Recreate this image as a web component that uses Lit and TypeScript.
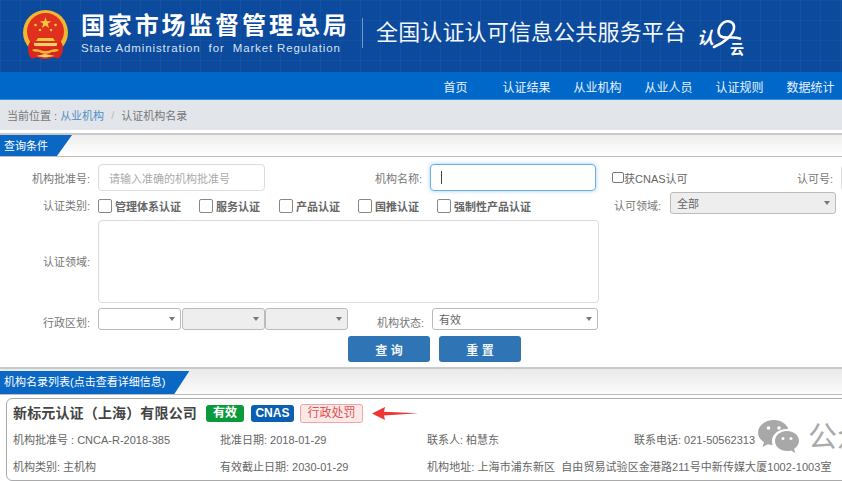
import { LitElement, html, css } from "lit";
import { customElement } from "lit/decorators.js";

const NAV = ["首页", "认证结果", "从业机构", "从业人员", "认证规则", "数据统计"];
const CHECKS = ["管理体系认证", "服务认证", "产品认证", "国推认证", "强制性产品认证"];

@customElement("app-root")
export class AppRoot extends LitElement {
  private _emblem() {
    return html`
      <svg class="emblem" viewBox="0 0 47 50" width="47" height="50">
        <circle cx="23.5" cy="22.5" r="22.5" fill="#f2b632"></circle>
        <circle cx="23.5" cy="21.5" r="18.5" fill="#e0301e"></circle>
        <path d="M23.5 7l1.4 4.2h4.4l-3.6 2.6 1.4 4.2-3.6-2.6-3.6 2.6 1.4-4.2-3.6-2.6h4.4z" fill="#f7c93e"></path>
        <g fill="#f7c93e">
          <circle cx="13.5" cy="15" r="1.3"></circle>
          <circle cx="33.5" cy="15" r="1.3"></circle>
          <circle cx="18" cy="20" r="1.3"></circle>
          <circle cx="29" cy="20" r="1.3"></circle>
        </g>
        <path d="M16 28h15l2 3H14z" fill="#f7c93e"></path>
        <path d="M12 33h23v3H12z" fill="#f4cf6a"></path>
        <path d="M6 38c0-3 1-5 3-7 1 3 3 5 6 6h17c3-1 5-3 6-6 2 2 3 4 3 7 0 5-2 8-4 10-2 1-4 0-6-1-3 2-6 2-8 2s-5 0-8-2c-2 1-4 2-6 1-2-2-3-5-3-10z" fill="#d8261c"></path>
        <path d="M10 40c4-3 8 1 13.500 1s9.500-4 13.500-1c-3 3-7 1-9 3-2 1-7 1-9 0-2-2-6 0-9-3z" fill="#f2b632"></path>
        <path d="M14 46l9-2 10 2-10 1.500z" fill="#f7d36a"></path>
      </svg>
    `;
  }

  private _logo() {
    return html`
      <div class="logo">
        <svg viewBox="0 0 50 36" width="50" height="36">
          <path d="M18 28C28 24 39 15 38 7 37 2 31 1 27 4 22 8 21 15 25 17.500 30 20 37 17 44 19.500" fill="none" stroke="#fff" stroke-width="2.600" stroke-linecap="round"></path>
        </svg>
        <span class="logo-ren">认</span>
        <span class="logo-yun">云</span>
      </div>
    `;
  }

  private _select(text = "", off = false, cls = "") {
    return html`<div class="select ${off ? "off" : ""} ${cls}"><span>${text}</span><i></i></div>`;
  }

  private _sectionBar(title: string, cls: string) {
    return html`
      <div class="bar ${cls}">
        <div class="tab">${title}</div>
      </div>
    `;
  }

  render() {
    return html`
      <header class="top">
        ${this._emblem()}
        <div class="brand">
          <div class="cn">国家市场监督管理总局</div>
          <div class="en">State Administration&nbsp; for&nbsp; Market Regulation</div>
        </div>
        <div class="sep"></div>
        <div class="platform">全国认证认可信息公共服务平台</div>
        ${this._logo()}
      </header>
      <nav class="nav">${NAV.map((n) => html`<a>${n}</a>`)}</nav>
      <div class="crumb">
        <span>当前位置 :</span><a>从业机构</a><em>/</em><span>认证机构名录</span>
      </div>

      ${this._sectionBar("查询条件", "first")}
      <section class="form">
        <div class="row r1">
          <label class="lab">机构批准号:</label>
          <div class="input ph">请输入准确的机构批准号</div>
          <label class="lab name">机构名称:</label>
          <div class="input focus"><b class="caret"></b></div>
          <div class="cnas"><i class="mini"></i>获CNAS认可</div>
          <label class="lab permit">认可号:</label>
          <div class="input stub"></div>
        </div>
        <div class="row r2">
          <label class="lab">认证类别:</label>
          <div class="checks">
            ${CHECKS.map((c) => html`<div class="check"><i></i><span>${c}</span></div>`)}
          </div>
          <label class="lab field">认可领域:</label>
          ${this._select("全部", true, "wide")}
        </div>
        <div class="row r3">
          <label class="lab">认证领域:</label>
          <div class="area"></div>
        </div>
        <div class="row r4">
          <label class="lab">行政区划:</label>
          <div class="regions">
            ${this._select()}${this._select("", true)}${this._select("", true)}
          </div>
          <label class="lab state">机构状态:</label>
          ${this._select("有效", false, "wide")}
        </div>
        <div class="row btns">
          <button>查 询</button>
          <button>重 置</button>
        </div>
      </section>

      ${this._sectionBar("机构名录列表(点击查看详细信息)", "second")}
      <article class="card">
        <div class="head">
          <h2>新标元认证（上海）有限公司</h2>
          <span class="tag green">有效</span>
          <span class="tag blue">CNAS</span>
          <span class="tag pink">行政处罚</span>
          <svg class="arrow" viewBox="0 0 46 13" width="46" height="13">
            <path d="M0 6.500L13 0l-1 4.800L46 6.200 12 8.400l1 4.600z" fill="#ee3535"></path>
          </svg>
        </div>
        <div class="info">
          <span>机构批准号 : CNCA-R-2018-385</span>
          <span>批准日期: 2018-01-29</span>
          <span>联系人: 柏慧东</span>
          <span>联系电话: 021-50562313</span>
          <span>机构类别: 主机构</span>
          <span>有效截止日期: 2030-01-29</span>
          <span class="addr">机构地址: 上海市浦东新区&nbsp; 自由贸易试验区金港路211号中新传媒大厦1002-1003室</span>
        </div>
      </article>

      <div class="mark">
        <svg viewBox="0 0 41 34" width="41" height="34">
          <path d="M16 0C7 0 0 5.500 0 12.500c0 4 2.300 7.400 6 9.700L4.500 27l5.300-2.800c1.600.4 3.200.6 4.900.7-.5-1.300-.7-2.500-.7-3.800 0-6.800 6.500-12 14.500-12 .6 0 1.200 0 1.800.1C28.800 4 23 0 16 0z" fill="#a8a8a8"></path>
          <path d="M29 11c-6.600 0-12 4.300-12 10s5.400 10 12 10c1.400 0 2.700-.2 4-.6l4.300 2.600-1.200-4.200c3-1.900 4.900-4.700 4.900-7.800 0-5.700-5.400-10-12-10z" fill="#a8a8a8"></path>
          <g fill="#fff">
            <circle cx="10.500" cy="8" r="1.800"></circle>
            <circle cx="21" cy="8" r="1.800"></circle>
            <circle cx="25" cy="18.500" r="1.500"></circle>
            <circle cx="33" cy="18.500" r="1.500"></circle>
          </g>
        </svg>
        <span>公众号</span>
      </div>
    `;
  }

  static styles = css`
    :host {
      display: block;
      position: relative;
      width: 842px;
      height: 481px;
      overflow: hidden;
      background: #fff;
      font-family: "Liberation Sans", "Noto Sans CJK SC", sans-serif;
      font-size: 11px;
      color: #666;
    }

    .top {
      display: flex;
      align-items: flex-start;
      height: 72px;
      padding: 10px 0 0 22px;
      box-sizing: border-box;
      background-color: #0b4a9d;
      background-image:
        linear-gradient(rgba(255, 255, 255, 0.035) 1px, transparent 1px),
        linear-gradient(90deg, rgba(255, 255, 255, 0.035) 1px, transparent 1px);
      background-size: 20px 20px;
    }

    .emblem {
      flex: none;
    }

    .brand {
      margin-left: 12px;
      width: 281px;
      color: #fff;
    }

    .cn {
      margin-top: 2px;
      font-size: 24px;
      line-height: 28px;
      font-weight: 700;
      letter-spacing: 2.85px;
      white-space: nowrap;
    }

    .en {
      margin-top: 1px;
      font-size: 11.500px;
      line-height: 14px;
      letter-spacing: 0.86px;
      color: #d5e2f3;
      white-space: nowrap;
    }

    .sep {
      flex: none;
      width: 1px;
      height: 30px;
      margin-top: 8px;
      background: #6f9bd0;
    }

    .platform {
      flex: none;
      margin: 9px 0 0 13px;
      font-size: 22px;
      line-height: 28px;
      letter-spacing: 0.15px;
      color: #f2f7fd;
      white-space: nowrap;
    }

    .logo {
      position: relative;
      flex: none;
      width: 50px;
      height: 36px;
      margin: 9px 0 0 10px;
      color: #fff;
    }

    .logo svg {
      position: absolute;
      left: 0;
      top: 0;
    }

    .logo-ren {
      position: absolute;
      left: 1px;
      top: 10px;
      font-size: 17px;
      line-height: 20px;
      font-weight: 700;
      font-style: italic;
    }

    .logo-yun {
      position: absolute;
      left: 34px;
      top: 22px;
      font-size: 14px;
      line-height: 16px;
      font-weight: 700;
    }

    .nav {
      display: flex;
      height: 28px;
      padding-left: 420px;
      box-sizing: border-box;
      background: #0068c9;
      border-bottom: 1px solid #3d8fdc;
    }

    .nav a {
      flex: none;
      width: 71px;
      text-align: center;
      font-size: 12px;
      line-height: 32px;
      color: #e8f2fc;
    }

    .crumb {
      display: flex;
      align-items: center;
      height: 30px;
      padding-left: 7px;
      box-sizing: border-box;
      background: #e2e5ea;
      color: #777;
    }

    .crumb a {
      margin-left: 3px;
      color: #4f8fc7;
    }

    .crumb em {
      margin: 0 7px 0 7px;
      font-style: normal;
      color: #bbb;
    }

    .bar {
      height: 24px;
      box-sizing: border-box;
      border-top: 2px solid #c9c9c9;
      border-bottom: 1px solid #bdbdbd;
      background: linear-gradient(#eeeeee, #ffffff);
    }

    .bar.first {
      margin-top: 3px;
    }

    .bar.second {
      height: 28px;
      margin-top: 5px;
      padding-top: 2px;
      background: linear-gradient(#e9e9e9, #fbfbfb);
    }

    .tab {
      display: inline-block;
      height: 100%;
      padding: 0 24px 0 4px;
      box-sizing: border-box;
      background: #0a68c4;
      clip-path: polygon(0 0, 100% 0, calc(100% - 15px) 100%, 0 100%);
      color: #fff;
      font-size: 11px;
      line-height: 22px;
      white-space: nowrap;
    }

    .form {
      display: flex;
      flex-direction: column;
      width: 860px;
      padding-top: 7px;
    }

    .row {
      display: flex;
      align-items: center;
    }

    .lab {
      flex: none;
      width: 90px;
      margin-right: 8px;
      text-align: right;
      white-space: nowrap;
      color: #777;
    }

    .input {
      flex: none;
      display: flex;
      align-items: center;
      width: 167px;
      height: 27px;
      padding-left: 10px;
      box-sizing: border-box;
      border: 1px solid #dcdcdc;
      border-radius: 4px;
    }

    .ph {
      color: #aaa;
    }

    .focus {
      width: 166px;
      border-color: #66afe9;
      box-shadow: 0 0 4px rgba(102, 175, 233, 0.6);
    }

    .caret {
      width: 1px;
      height: 13px;
      background: #444;
    }

    .lab.name {
      width: 157px;
      margin-right: 8px;
    }

    .cnas {
      flex: none;
      display: flex;
      align-items: center;
      width: 132px;
      margin-left: 16px;
      color: #666;
      white-space: nowrap;
    }

    .mini {
      width: 10px;
      height: 9px;
      border: 1px solid #777;
      border-radius: 2px;
    }

    .lab.permit {
      width: 89px;
      margin-right: 8px;
    }

    .stub {
      width: 20px;
    }

    .r2 {
      align-items: flex-start;
      height: 22px;
      margin-top: 1px;
    }

    .r2 .lab {
      margin-top: 5px;
    }

    .checks {
      flex: none;
      display: grid;
      grid-template-columns: 101px 80px 79px 79px 120px;
      margin-top: 6px;
    }

    .check {
      display: flex;
      align-items: center;
      gap: 3px;
      font-weight: 700;
      color: #666;
      white-space: nowrap;
    }

    .check i {
      width: 14px;
      height: 14px;
      box-sizing: border-box;
      border: 1px solid #888;
      border-radius: 2px;
    }

    .lab.field {
      width: 104px;
      margin-right: 9px;
    }

    .select {
      flex: none;
      display: flex;
      align-items: center;
      justify-content: space-between;
      width: 83px;
      height: 22px;
      padding: 0 5px 0 6px;
      box-sizing: border-box;
      border: 1px solid #bbb;
      border-radius: 3px;
      background: #fff;
      color: #666;
    }

    .select.off {
      background: #eeeeee;
    }

    .select.wide {
      width: 166px;
    }

    .select i {
      width: 0;
      height: 0;
      border-left: 3px solid transparent;
      border-right: 3px solid transparent;
      border-top: 4px solid #777;
    }

    .r3 {
      margin-top: 6px;
    }

    .r3 .lab {
      margin-bottom: 2px;
    }

    .area {
      width: 501px;
      height: 83px;
      box-sizing: border-box;
      border: 1px solid #dcdcdc;
      border-radius: 4px;
    }

    .r4 {
      margin-top: 5px;
    }

    .r4 .lab {
      margin-top: 5px;
    }

    .regions {
      flex: none;
      display: flex;
      gap: 0.5px;
    }

    .lab.state {
      width: 76px;
      margin-right: 8px;
    }

    .btns {
      gap: 9px;
      margin-top: 6px;
      padding-left: 348px;
    }

    button {
      width: 82px;
      height: 26px;
      padding: 0;
      border: none;
      border-radius: 3px;
      background: #2f74b5;
      color: #eef4fa;
      font: 700 12px "Liberation Sans", "Noto Sans CJK SC", sans-serif;
    }

    .card {
      width: 860px;
      height: 83px;
      margin: 3px 0 0 6px;
      padding: 5px 0 0 6px;
      box-sizing: border-box;
      border: 1px solid #aaa;
      border-radius: 6px;
    }

    .head {
      display: flex;
      align-items: center;
      height: 19px;
    }

    h2 {
      margin: 0 9px 0 0;
      font-size: 14px;
      line-height: 19px;
      font-weight: 700;
      letter-spacing: 0.15px;
      color: #444;
      white-space: nowrap;
    }

    .tag {
      flex: none;
      box-sizing: border-box;
      height: 17px;
      margin-right: 7px;
      border-radius: 3px;
      text-align: center;
      font-size: 12px;
      line-height: 17px;
      font-weight: 700;
      color: #fff;
    }

    .green {
      width: 38px;
      background: #0a9a3c;
    }

    .blue {
      width: 43px;
      margin-right: 6px;
      background: #0b5fb0;
    }

    .pink {
      width: 63px;
      height: 19px;
      margin-right: 6px;
      border: 1px solid #f3a6a6;
      background: #fde8e8;
      color: #d9534f;
      font-weight: 400;
    }

    .arrow {
      flex: none;
      margin-left: 3px;
    }

    .info {
      display: grid;
      grid-template-columns: 207px 207px 207px 1fr;
      grid-auto-rows: 27px;
      margin-top: 4px;
      line-height: 27px;
      color: #666;
      white-space: nowrap;
    }

    .addr {
      grid-column: 3 / 5;
      letter-spacing: 0.07px;
    }

    .mark {
      position: absolute;
      left: 758px;
      top: 420px;
      display: flex;
      align-items: center;
      gap: 9px;
      color: #aaa;
      font-size: 29px;
      line-height: 34px;
      white-space: nowrap;
    }

    .mark svg {
      flex: none;
    }
  `;
}
